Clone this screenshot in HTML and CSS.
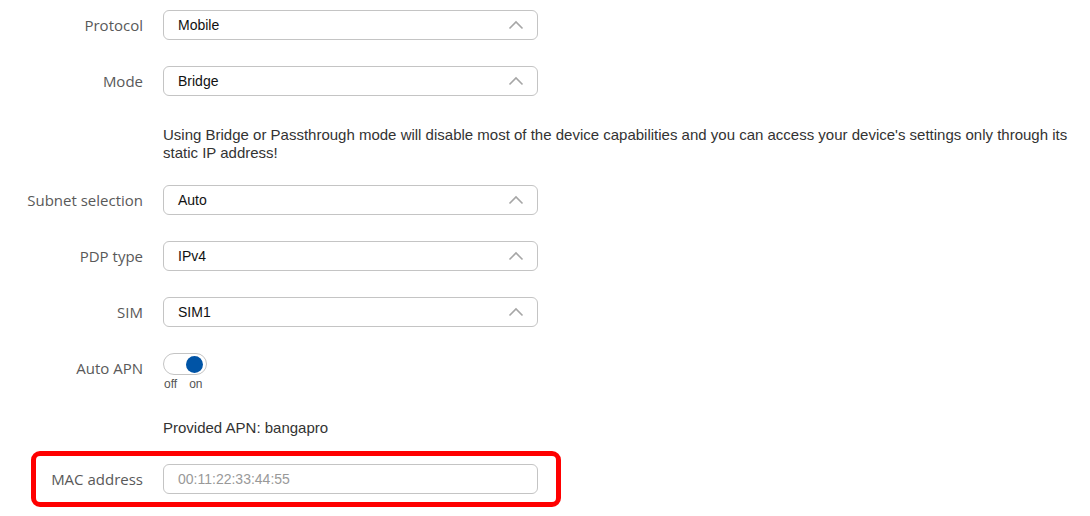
FILE: index.html
```html
<!DOCTYPE html>
<html lang="en">
<head>
    <meta charset="UTF-8">
    <title>Mobile interface</title>
    <link rel="stylesheet" href="styles.css">
</head>
<body>
    <div class="form">
        <div class="row">
            <div class="label">Protocol</div>
            <div class="select">Mobile<svg class="chevron" width="16" height="10" viewBox="0 0 16 10"><path d="M1.5 8.5 L8 2 L14.5 8.5" /></svg></div>
        </div>
        <div class="row">
            <div class="label">Mode</div>
            <div class="select">Bridge<svg class="chevron" width="16" height="10" viewBox="0 0 16 10"><path d="M1.5 8.5 L8 2 L14.5 8.5" /></svg></div>
        </div>
        <div class="row hint-row">
            <div class="label"></div>
            <div class="hint">Using Bridge or Passthrough mode will disable most of the device capabilities and you can access your device's settings only through its static IP address!</div>
        </div>
        <div class="row">
            <div class="label">Subnet selection</div>
            <div class="select">Auto<svg class="chevron" width="16" height="10" viewBox="0 0 16 10"><path d="M1.5 8.5 L8 2 L14.5 8.5" /></svg></div>
        </div>
        <div class="row">
            <div class="label">PDP type</div>
            <div class="select">IPv4<svg class="chevron" width="16" height="10" viewBox="0 0 16 10"><path d="M1.5 8.5 L8 2 L14.5 8.5" /></svg></div>
        </div>
        <div class="row">
            <div class="label">SIM</div>
            <div class="select">SIM1<svg class="chevron" width="16" height="10" viewBox="0 0 16 10"><path d="M1.5 8.5 L8 2 L14.5 8.5" /></svg></div>
        </div>
        <div class="row toggle-row">
            <div class="label">Auto APN</div>
            <div class="toggle-wrap">
                <div class="toggle"><span class="knob"></span></div>
                <div class="toggle-text"><span>off</span><span>on</span></div>
            </div>
        </div>
        <div class="row info-row">
            <div class="label"></div>
            <div class="info">Provided APN: bangapro</div>
        </div>
        <div class="row highlight">
            <div class="label">MAC address</div>
            <div class="input">00:11:22:33:44:55</div>
        </div>
    </div>
</body>
</html>
```

FILE: styles.css
```css
* {
    box-sizing: border-box;
}
body {
    margin: 0;
    background: #fff;
    font-family: "Liberation Sans", Arial, sans-serif;
    font-size: 14px;
    color: #222;
}
.form {
    padding-top: 10px;
}
.row {
    display: flex;
    align-items: flex-start;
    margin-bottom: 26px;
}
.label {
    flex: none;
    width: 143px;
    height: 30px;
    margin-right: 20px;
    text-align: right;
    line-height: 30px;
    font-family: "Open Sans", sans-serif;
    font-size: 15px;
    color: #595959;
}
.select, .input {
    display: flex;
    align-items: center;
    justify-content: space-between;
    width: 375px;
    height: 30px;
    padding: 0 13px 0 14px;
    border: 1px solid #c4c4c4;
    border-radius: 6px;
    color: #111;
}
.chevron {
    fill: none;
    stroke: #a6a6a6;
    stroke-width: 1.6;
}
.hint-row {
    margin-top: 30px;
    margin-bottom: 23px;
}
.hint {
    width: 912px;
    line-height: 18px;
    font-size: 15px;
    color: #333;
}
.toggle {
    position: relative;
    width: 44px;
    height: 22px;
    border: 1px solid #c4c4c4;
    border-radius: 11px;
}
.knob {
    position: absolute;
    top: 2px;
    right: 3px;
    width: 17px;
    height: 17px;
    border-radius: 50%;
    background: #0054a6;
}
.toggle-text {
    display: flex;
    gap: 12px;
    padding-left: 1px;
    margin-top: 2px;
    font-size: 12px;
    line-height: 14px;
    color: #555;
}
.info-row {
    margin-top: -4px;
    margin-bottom: 8px;
}
.info {
    line-height: 30px;
    font-size: 15px;
    color: #333;
}
.highlight {
    width: 530px;
    margin-left: 31px;
    padding: 8px 0;
    border: 5px solid #f00;
    border-radius: 9px;
}
.highlight .label {
    width: 107px;
}
.input {
    color: #999;
}
```
